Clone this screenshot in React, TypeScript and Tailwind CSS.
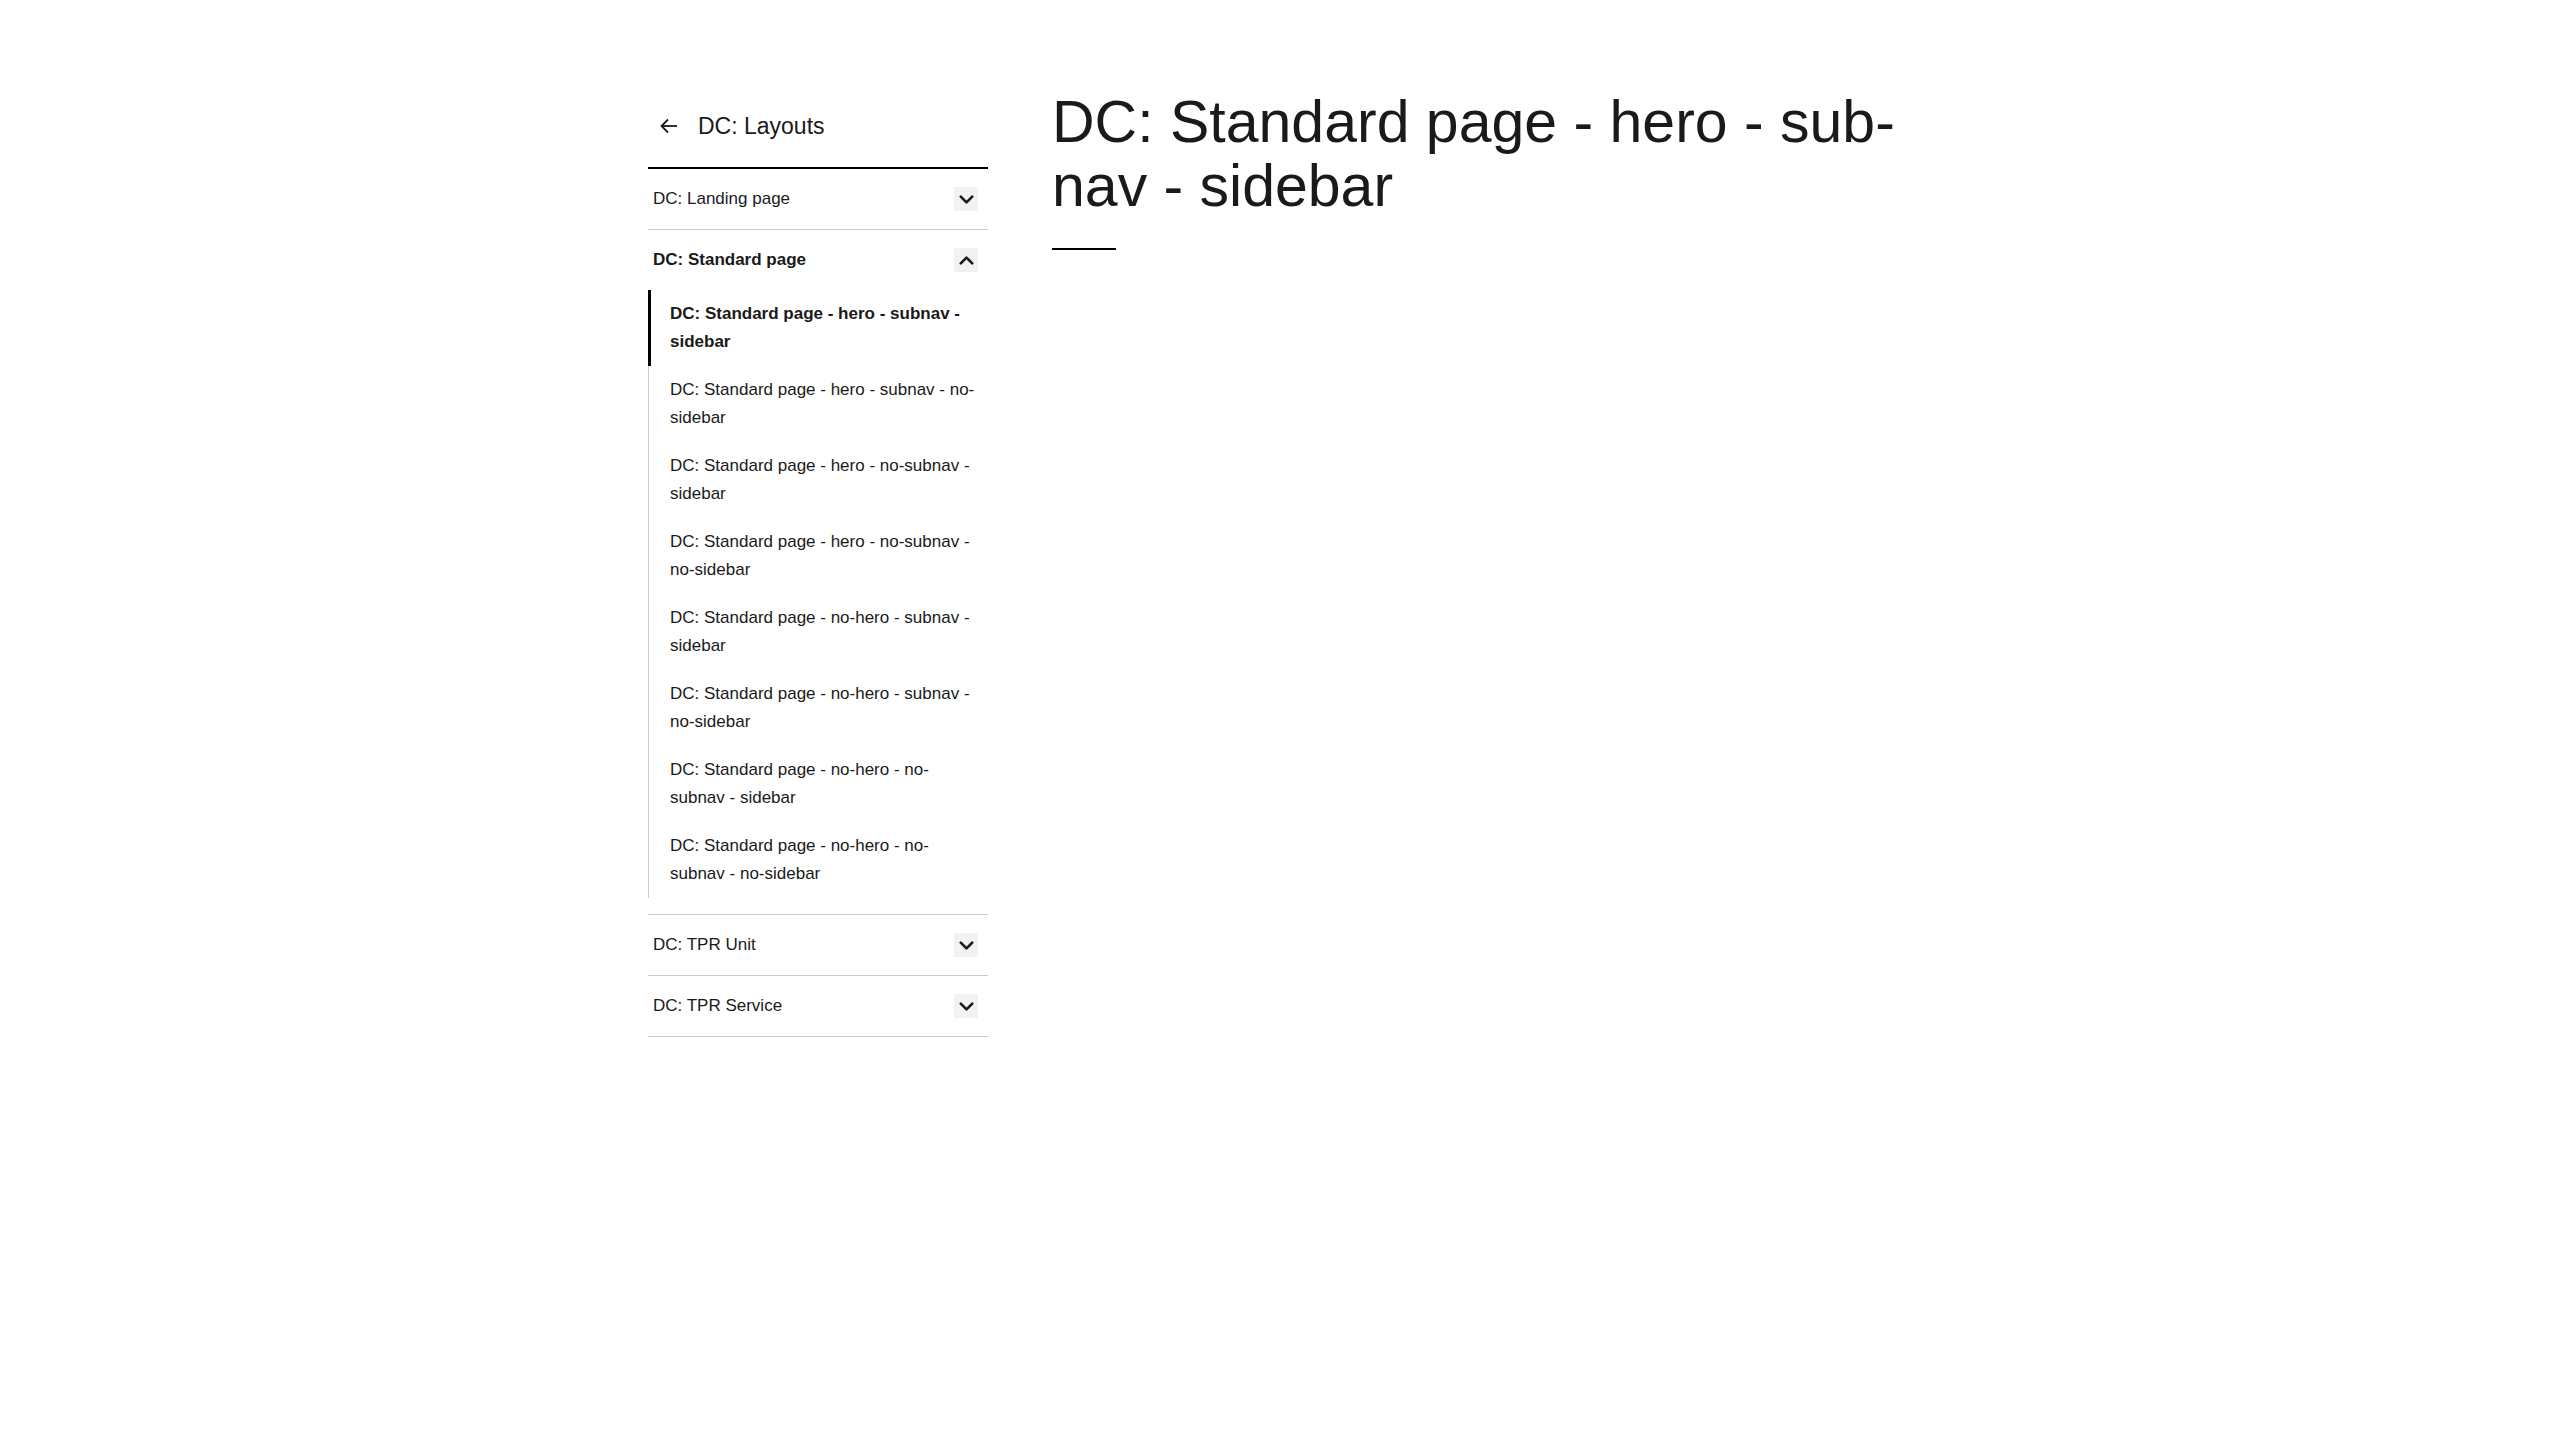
import React, { useState } from 'react';
import { ChevronDown, ChevronUp } from 'lucide-react';

const groups = [
  { label: 'DC: Landing page', items: [] as string[] },
  {
    label: 'DC: Standard page',
    items: [
      'DC: Standard page - hero - subnav - sidebar',
      'DC: Standard page - hero - subnav - no-sidebar',
      'DC: Standard page - hero - no-subnav - sidebar',
      'DC: Standard page - hero - no-subnav - no-sidebar',
      'DC: Standard page - no-hero - subnav - sidebar',
      'DC: Standard page - no-hero - subnav - no-sidebar',
      'DC: Standard page - no-hero - no-subnav - sidebar',
      'DC: Standard page - no-hero - no-subnav - no-sidebar',
    ],
  },
  { label: 'DC: TPR Unit', items: [] as string[] },
  { label: 'DC: TPR Service', items: [] as string[] },
];

const App = () => {
  const [open, setOpen] = useState<string>('DC: Standard page');
  const active = 'DC: Standard page - hero - subnav - sidebar';

  return (
    <div className="min-h-[1440px] bg-white text-[#1a1a1a] font-['Liberation_Sans',Arial,sans-serif]">
      <div className="mx-auto w-[1264px] pt-[90px] flex gap-[64px]">
        {/* sidebar */}
        <nav className="w-[340px] shrink-0">
          <div className="h-[79px] pb-[6px] flex items-center border-b-2 border-black pl-[12px]">
            <svg width="18" height="16" viewBox="0 0 18 16" fill="none" stroke="currentColor" strokeWidth="1.8" className="shrink-0">
              <path d="M17 8H2" />
              <path d="M8 1.5L1.5 8L8 14.5" />
            </svg>
            <span className="ml-[20px] text-[23px] leading-[32px]">DC: Layouts</span>
          </div>

          {groups.map((g) => {
            const isOpen = open === g.label;
            return (
              <div key={g.label} className="border-b border-[#cccccc]">
                <button
                  onClick={() => setOpen(isOpen ? '' : g.label)}
                  className={`w-full h-[60px] flex items-center justify-between pl-[5px] pr-[10px] text-left text-[17px] ${isOpen ? 'font-bold' : ''}`}
                >
                  <span>{g.label}</span>
                  <span className="w-[24px] h-[24px] bg-[#f2f2f2] flex items-center justify-center">
                    {isOpen ? <ChevronUp size={23} strokeWidth={2.8} /> : <ChevronDown size={23} strokeWidth={2.8} />}
                  </span>
                </button>
                {isOpen && g.items.length > 0 && (
                  <ul className="pb-[16px]">
                    {g.items.map((it) => (
                      <li
                        key={it}
                        className={`h-[76px] pt-[10px] pr-[10px] text-[17px] leading-[28px] ${
                          it === active
                            ? 'border-l-[3px] border-black pl-[19px] font-bold'
                            : 'border-l border-[#cccccc] pl-[21px]'
                        }`}
                      >
                        {it}
                      </li>
                    ))}
                  </ul>
                )}
              </div>
            );
          })}
        </nav>

        {/* main */}
        <main className="w-[860px]">
          <h1 className="text-[59px] leading-[64px] font-normal">
            DC: Standard page - hero - sub-nav - sidebar
          </h1>
          <div className="mt-[30px] w-[64px] h-[2px] bg-black" />
        </main>
      </div>
    </div>
  );
};

export default App;
